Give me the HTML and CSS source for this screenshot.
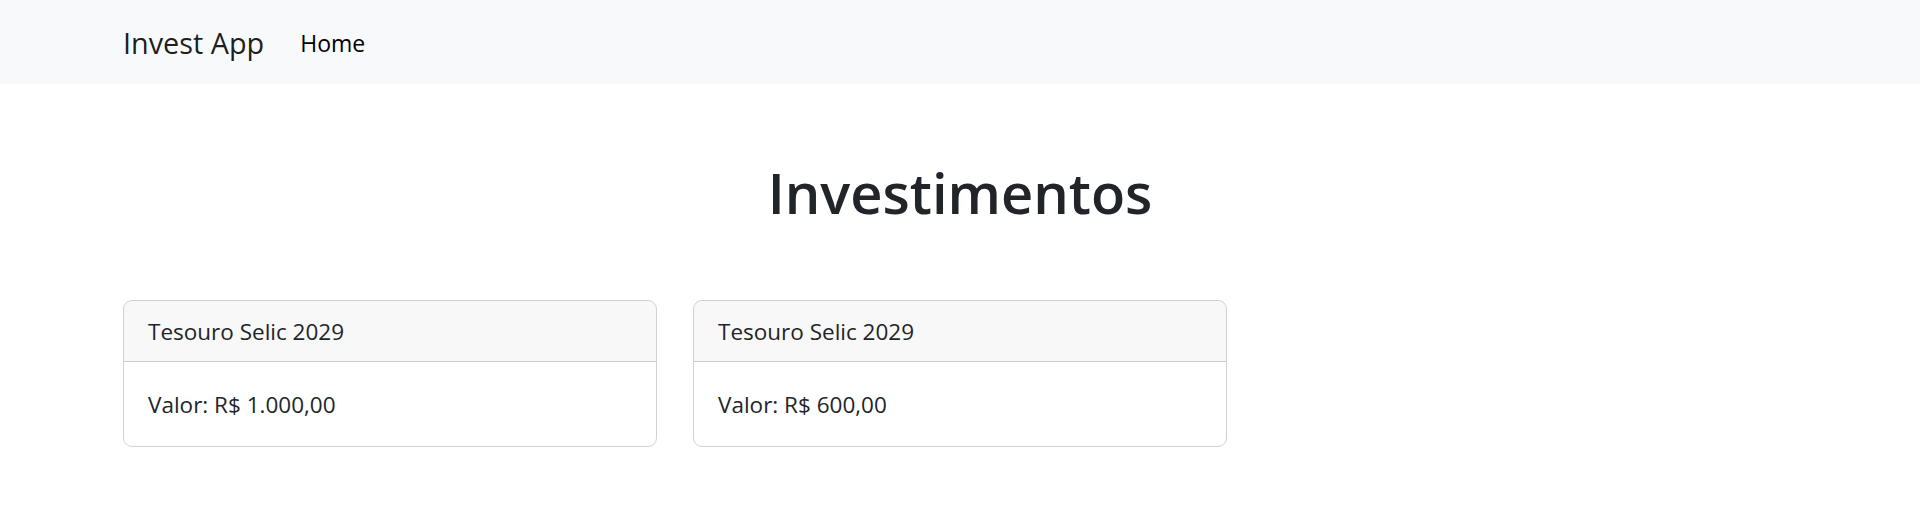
FILE: index.html
```html
<!DOCTYPE html>
<html lang="pt-BR">
<head>
<meta charset="utf-8">
<title>Invest App</title>
<link rel="stylesheet" href="styles.css">
</head>
<body>
<nav class="navbar">
  <div class="container nav-inner">
    <a class="brand" href="#">Invest App</a>
    <a class="nav-link" href="#">Home</a>
  </div>
</nav>
<main class="container">
  <h1 class="title">Investimentos</h1>
  <div class="cards">
    <div class="card">
      <div class="card-header">Tesouro Selic 2029</div>
      <div class="card-body">Valor: R$ 1.000,00</div>
    </div>
    <div class="card">
      <div class="card-header">Tesouro Selic 2029</div>
      <div class="card-body">Valor: R$ 600,00</div>
    </div>
  </div>
</main>
</body>
</html>
```

FILE: styles.css
```css
* { box-sizing: border-box; }
html, body { margin: 0; padding: 0; }
body {
  font-family: "Open Sans", "Noto Sans", "Liberation Sans", sans-serif;
  font-size: 22.5px;
  line-height: 36px;
  color: #212529;
  background: #fff;
}
.container {
  width: 1710px;
  margin: 0 auto;
  padding: 0 18px;
}
.navbar {
  background: #f8f9fa;
  padding: 12px 0;
}
.nav-inner {
  display: flex;
  align-items: center;
}
.brand {
  font-size: 28.8px;
  line-height: 45px;
  padding: 8px 0 7px;
  margin-right: 24px;
  color: rgba(0, 0, 0, 0.9);
  text-decoration: none;
}
.nav-link {
  font-size: 23px;
  line-height: 36px;
  padding: 13px 12px 11px;
  color: #000;
  text-decoration: none;
}
.title {
  margin: 72px 0 72px;
  text-align: center;
  font-size: 56px;
  line-height: 72px;
  font-weight: 600;
}
.cards {
  display: grid;
  grid-template-columns: repeat(3, 1fr);
  gap: 36px;
}
.card {
  border: 1px solid rgba(0, 0, 0, 0.175);
  border-radius: 9px;
  overflow: hidden;
}
.card-header {
  padding: 13px 24px 11px;
  background: rgba(33, 37, 41, 0.03);
  border-bottom: 1px solid rgba(0, 0, 0, 0.175);
}
.card-body {
  padding: 25px 24px 23px;
}
```
